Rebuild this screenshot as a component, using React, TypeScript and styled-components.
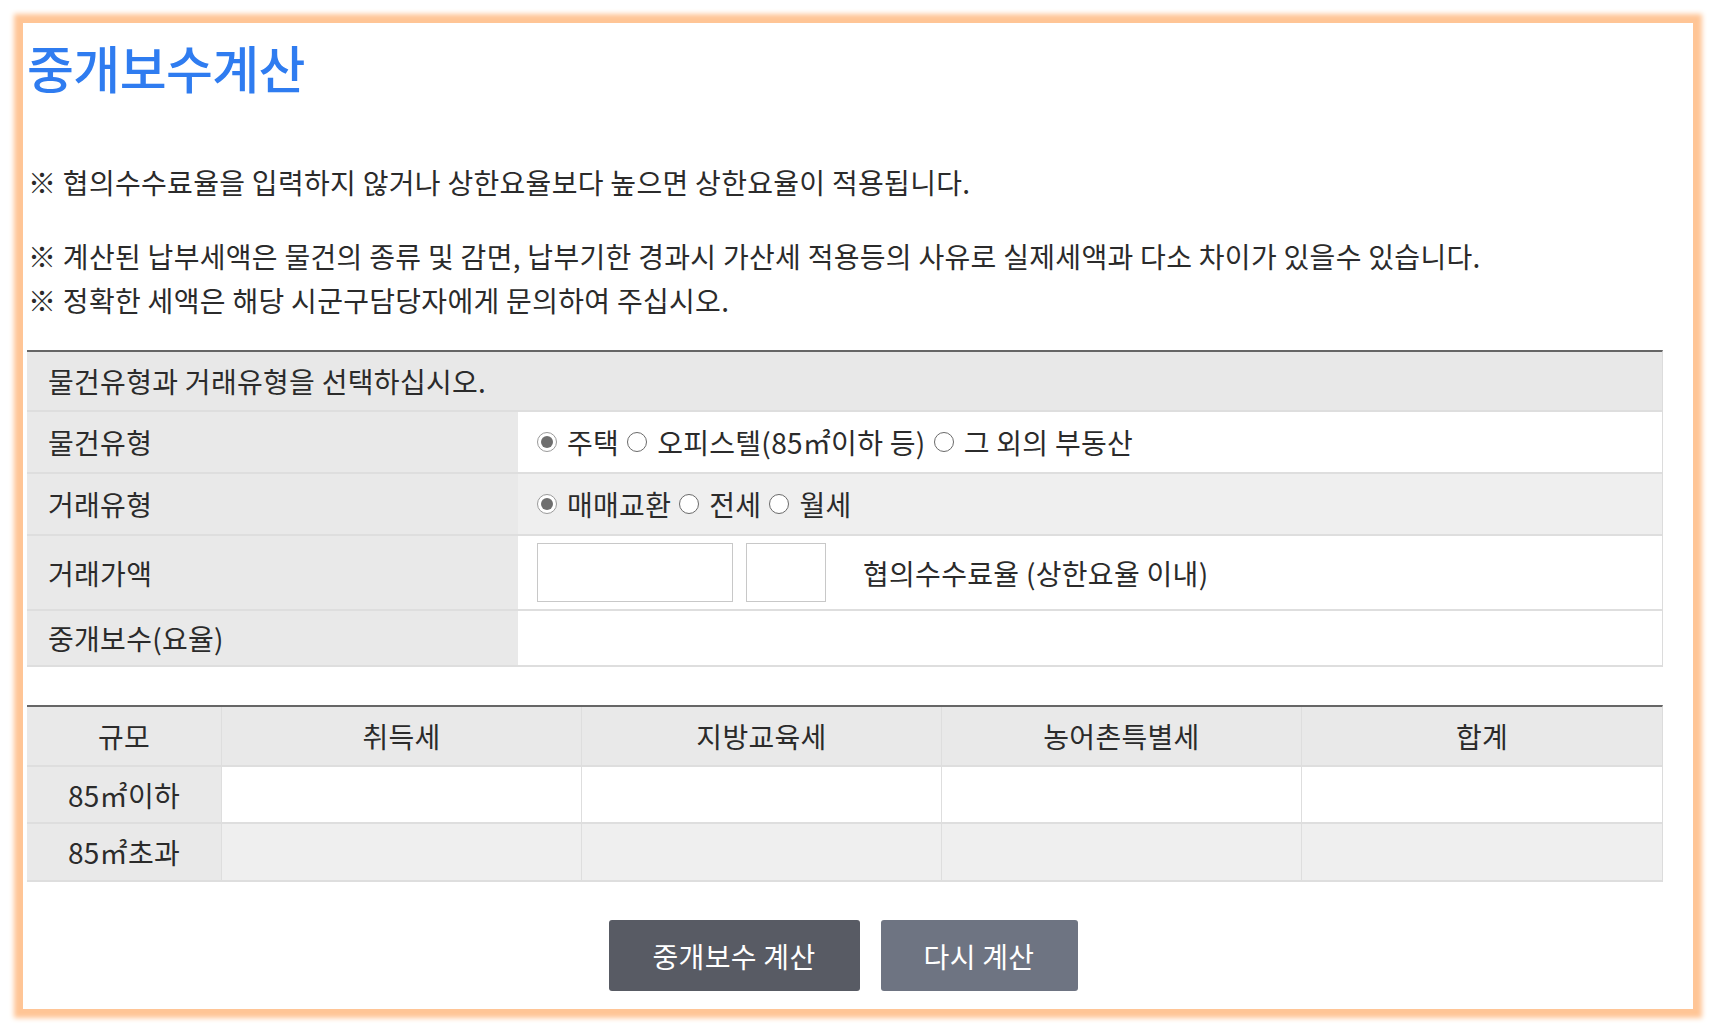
import React from "react";
import styled, { createGlobalStyle, css } from "styled-components";

const Global = createGlobalStyle`
  html, body { margin: 0; padding: 0; background: #fff; }
  body {
    font-family: "Noto Sans CJK KR", "Noto Sans", sans-serif;
    color: #2b2b2b;
  }
  * { box-sizing: border-box; }
`;

const Page = styled.div`
  width: 1716px;
  height: 1032px;
  padding: 23px;
`;

const Card = styled.div`
  width: 1670px;
  height: 986px;
  background: #fff;
  box-shadow: 0 0 5px 9px #ffc596;
  padding: 14px 30px 0 4px;
  display: flex;
  flex-direction: column;
`;

const Title = styled.h1`
  margin: 0;
  font-size: 51px;
  line-height: 60px;
  font-weight: 500;
  letter-spacing: -0.6px;
  color: #2f7cf0;
`;

const Notes = styled.div`
  margin-top: 63px;
  padding-left: 1px;
  display: flex;
  flex-direction: column;
  gap: 30px;
`;

const Note = styled.p`
  margin: 0;
  font-size: 28px;
  line-height: 44px;
  letter-spacing: 0.3px;
  color: #2b2b2b;
`;

const FormTable = styled.div`
  margin-top: 28px;
  border-top: 2px solid #666;
  border-right: 1px solid #dcdcdc;
  display: grid;
  grid-template-columns: 491px 1fr;
  font-size: 28px;
  letter-spacing: 0.3px;
`;

const Caption = styled.div`
  grid-column: 1 / -1;
  height: 60px;
  background: #e8e8e8;
  border-bottom: 2px solid #dedede;
  padding-left: 21px;
  display: flex;
  align-items: center;
`;

const Label = styled.div<{ $h: number }>`
  height: ${(p) => p.$h}px;
  background: #e9e9e9;
  border-bottom: 2px solid #dedede;
  padding-left: 21px;
  display: flex;
  align-items: center;
`;

const Value = styled.div<{ $h: number; $tone?: boolean }>`
  height: ${(p) => p.$h}px;
  background: ${(p) => (p.$tone ? "#efefef" : "#fff")};
  border-bottom: 2px solid #dedede;
  padding-left: 19px;
  display: flex;
  align-items: center;
`;

const Options = styled.div`
  display: flex;
  align-items: center;
  gap: 8px;
`;

const Option = styled.label`
  display: flex;
  align-items: center;
  gap: 10px;
`;

const Radio = styled.span<{ $on?: boolean }>`
  position: relative;
  flex: none;
  width: 20px;
  height: 20px;
  border-radius: 50%;
  background: #fff;
  border: 1.5px solid ${(p) => (p.$on ? "#9a9a9a" : "#6a6a6a")};
  ${(p) =>
    p.$on &&
    css`
      &::after {
        content: "";
        position: absolute;
        inset: 3px;
        border-radius: 50%;
        background: #6e6e6e;
      }
    `}
`;

const Field = styled.div<{ $w: number }>`
  width: ${(p) => p.$w}px;
  height: 59px;
  border: 1px solid #c8c8c8;
  background: #fff;
  flex: none;
`;

const Inputs = styled.div`
  display: flex;
  align-items: center;
  gap: 13px;
`;

const Hint = styled.span`
  margin-left: 24px;
`;

const TaxTable = styled.div`
  margin-top: 38px;
  border-top: 2px solid #666;
  border-right: 1px solid #dcdcdc;
  display: grid;
  grid-template-columns: 195px repeat(4, 1fr);
  font-size: 28px;
  letter-spacing: 0.3px;
`;

const Cell = styled.div<{ $bg: string; $h: number }>`
  height: ${(p) => p.$h}px;
  background: ${(p) => p.$bg};
  border-bottom: 2px solid #dedede;
  border-right: 1px solid #dedede;
  display: flex;
  align-items: center;
  justify-content: center;
  &:nth-child(5n) {
    border-right: none;
  }
`;

const Actions = styled.div`
  margin-top: 38px;
  padding-right: 4px;
  display: flex;
  justify-content: center;
  gap: 21px;
`;

const Button = styled.button<{ $w: number; $bg: string }>`
  width: ${(p) => p.$w}px;
  height: 71px;
  border: none;
  border-radius: 3px;
  background: ${(p) => p.$bg};
  color: #fff;
  font-family: "Noto Sans CJK KR", "Noto Sans", sans-serif;
  font-size: 28px;
  letter-spacing: 0.3px;
  cursor: pointer;
`;

const taxHeads = ["규모", "취득세", "지방교육세", "농어촌특별세", "합계"];

export default function App() {
  return (
    <>
      <Global />
      <Page>
        <Card>
          <Title>중개보수계산</Title>
          <Notes>
            <Note>※ 협의수수료율을 입력하지 않거나 상한요율보다 높으면 상한요율이 적용됩니다.</Note>
            <Note>
              ※ 계산된 납부세액은 물건의 종류 및 감면, 납부기한 경과시 가산세 적용등의 사유로 실제세액과 다소 차이가 있을수 있습니다.
              <br />※ 정확한 세액은 해당 시군구담당자에게 문의하여 주십시오.
            </Note>
          </Notes>

          <FormTable>
            <Caption>물건유형과 거래유형을 선택하십시오.</Caption>
            <Label $h={62}>물건유형</Label>
            <Value $h={62}>
              <Options>
                <Option><Radio $on />주택</Option>
                <Option><Radio />오피스텔(85㎡이하 등)</Option>
                <Option><Radio />그 외의 부동산</Option>
              </Options>
            </Value>
            <Label $h={62}>거래유형</Label>
            <Value $h={62} $tone>
              <Options>
                <Option><Radio $on />매매교환</Option>
                <Option><Radio />전세</Option>
                <Option><Radio />월세</Option>
              </Options>
            </Value>
            <Label $h={75}>거래가액</Label>
            <Value $h={75}>
              <Inputs>
                <Field $w={196} />
                <Field $w={80} />
                <Hint>협의수수료율 (상한요율 이내)</Hint>
              </Inputs>
            </Value>
            <Label $h={56}>중개보수(요율)</Label>
            <Value $h={56} />
          </FormTable>

          <TaxTable>
            {taxHeads.map((h) => (
              <Cell key={h} $bg="#e9e9e9" $h={60}>{h}</Cell>
            ))}
            <Cell $bg="#e9e9e9" $h={57}>85㎡이하</Cell>
            <Cell $bg="#fff" $h={57} />
            <Cell $bg="#fff" $h={57} />
            <Cell $bg="#fff" $h={57} />
            <Cell $bg="#fff" $h={57} />
            <Cell $bg="#e9e9e9" $h={58}>85㎡초과</Cell>
            <Cell $bg="#efefef" $h={58} />
            <Cell $bg="#efefef" $h={58} />
            <Cell $bg="#efefef" $h={58} />
            <Cell $bg="#efefef" $h={58} />
          </TaxTable>

          <Actions>
            <Button $w={251} $bg="#585b64">중개보수 계산</Button>
            <Button $w={197} $bg="#6e7482">다시 계산</Button>
          </Actions>
        </Card>
      </Page>
    </>
  );
}
